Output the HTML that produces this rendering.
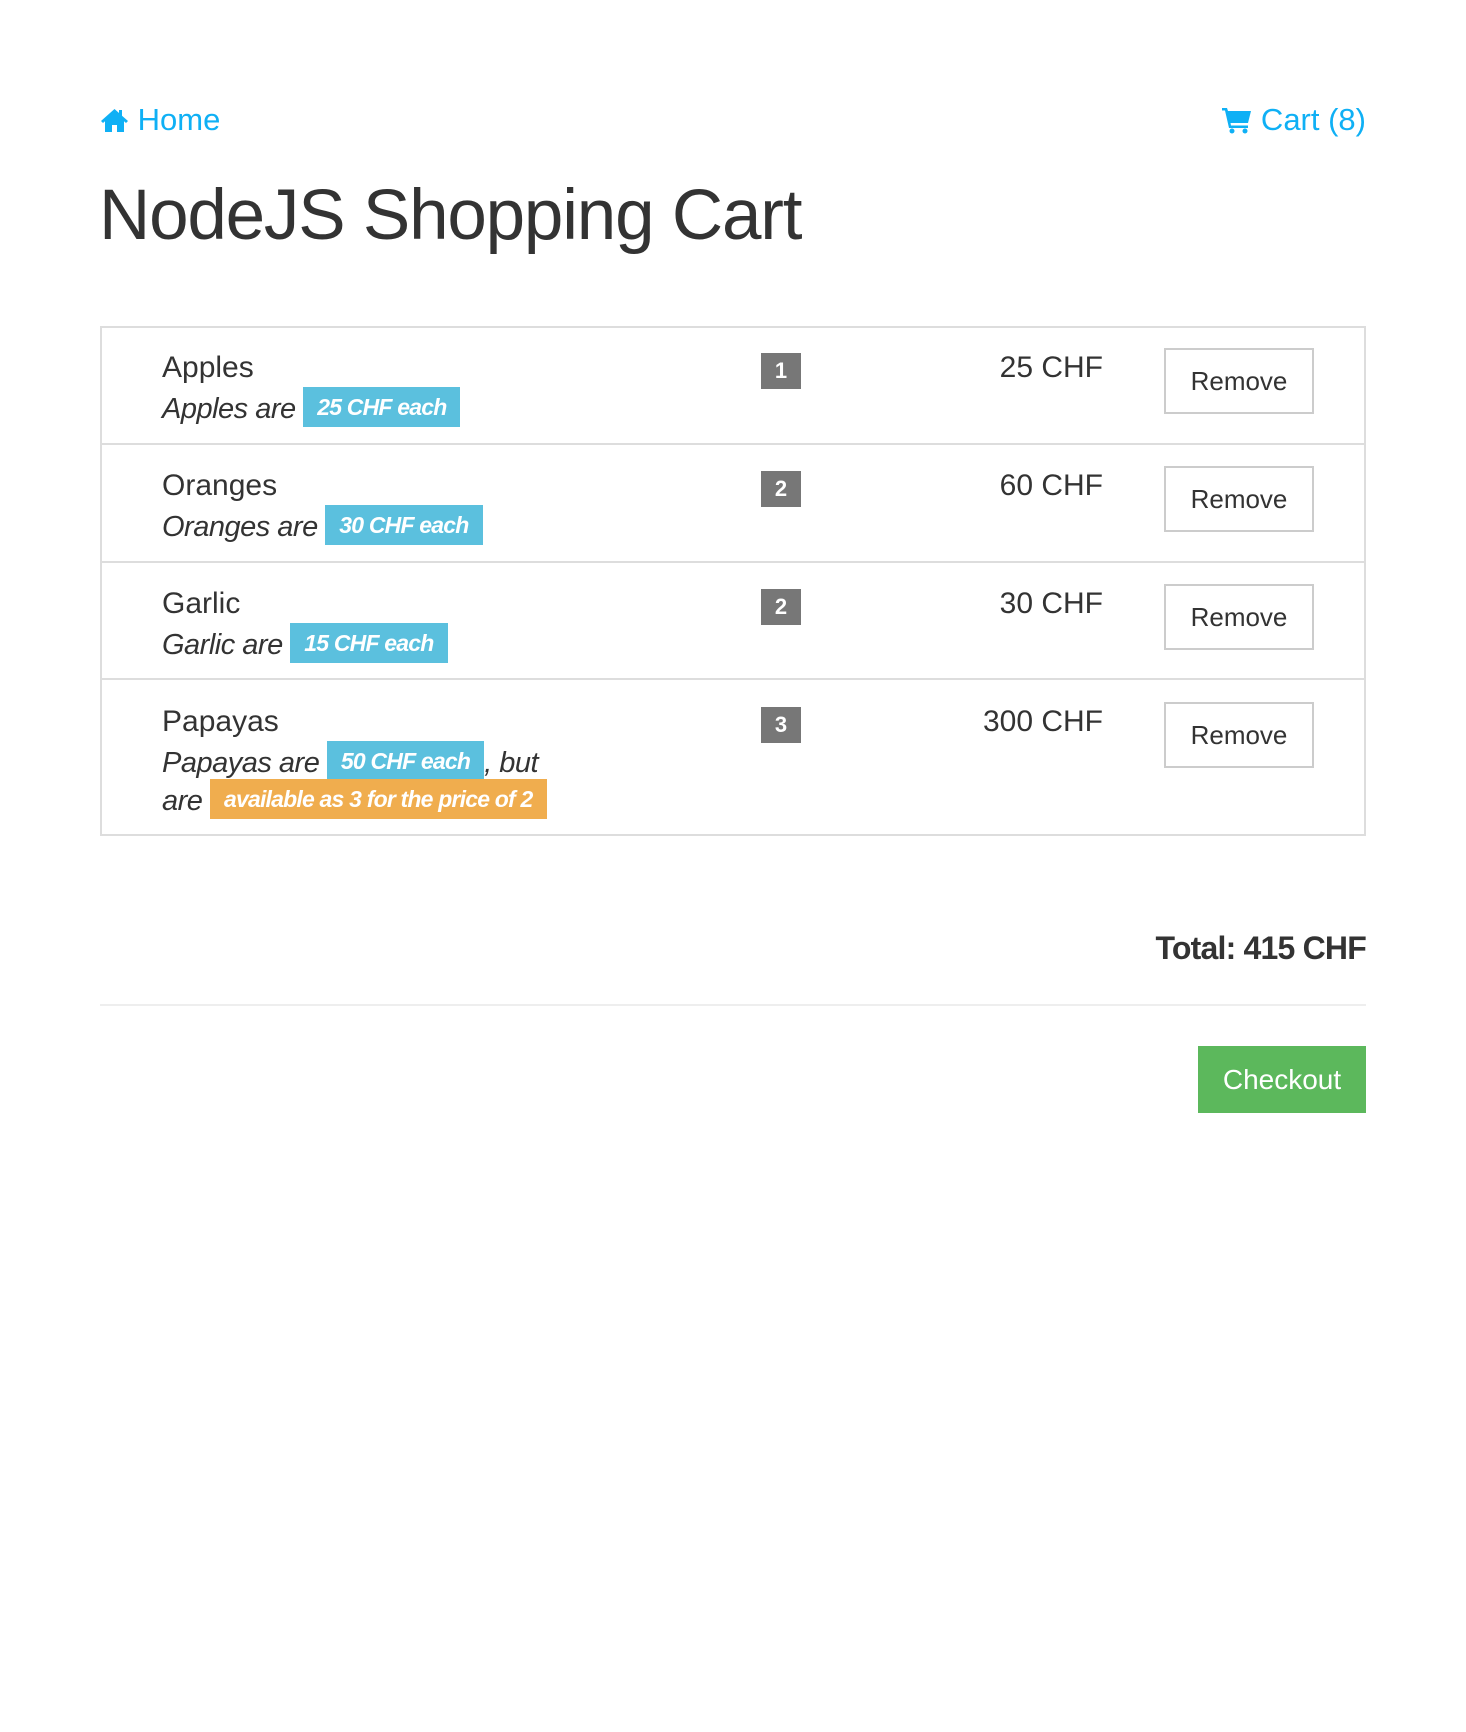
<!DOCTYPE html>
<html><head><meta charset="utf-8"><style>
body{margin:0;width:1466px;height:1732px;background:#fff;font-family:"Liberation Sans",sans-serif;color:#333;position:relative;overflow:hidden}
.a{position:absolute;white-space:nowrap}
.link{color:#0fb0f5;font-size:31px;line-height:40px}
h1{position:absolute;left:99px;top:166px;margin:0;font-weight:normal;font-size:71px;line-height:100px;letter-spacing:-1.2px;color:#333}
.tbl{position:absolute;left:100px;top:326px;width:1262px;height:506px;border:2px solid #ddd}
.sep{position:absolute;left:100px;width:1266px;height:2px;background:#ddd}
.name{font-size:30px;line-height:36px}
.it{font-style:italic;font-size:29px;line-height:38px;letter-spacing:-0.5px}
.lbl{display:inline-block;color:#fff;font-weight:bold;font-style:italic;font-size:23px;line-height:40px;padding:0 14px;letter-spacing:-0.8px;vertical-align:middle;margin-top:-6px}
.blue{background:#5bc0de}.org{background:#f0ad4e}
.badge{position:absolute;left:761px;width:40px;height:36px;background:#777;color:#fff;font-weight:bold;font-size:22px;line-height:36px;text-align:center}
.price{position:absolute;right:363px;font-size:30px;line-height:36px}
.btn{position:absolute;left:1164px;width:146px;height:62px;border:2px solid #ccc;font-size:26px;line-height:62px;text-align:center;color:#333}
</style></head><body>
<div class="a link" style="left:100px;top:100px"><svg width="29" height="26" viewBox="0 0 29 26" style="vertical-align:-3px"><path d="M14.5 2 L1 14 L3 16 L5 14.3 V25 H12 V18 H17 V25 H24 V14.3 L26 16 L28 14 L22 8.7 V3 H19 V6 Z" fill="#0fb0f5"/></svg> Home</div>
<div class="a link" style="right:100px;top:100px"><svg width="30" height="28" viewBox="0 0 30 28" style="vertical-align:-4px"><path d="M0 2 H5 L6 5 H29 L26 17 H8.5 L9 19.5 H26 V22 H7 L3 4.5 H0 Z" fill="#0fb0f5"/><circle cx="10" cy="25" r="2.5" fill="#0fb0f5"/><circle cx="23" cy="25" r="2.5" fill="#0fb0f5"/></svg> Cart (8)</div>
<h1>NodeJS Shopping Cart</h1>
<div class="tbl"></div>
<div class="sep" style="top:443px"></div>
<div class="sep" style="top:561px"></div>
<div class="sep" style="top:678px"></div>

<div class="a name" style="left:162px;top:350px">Apples</div>
<div class="a it" style="left:162px;top:390px">Apples are <span class="lbl blue">25 CHF each</span></div>
<div class="badge" style="top:353px">1</div>
<div class="price" style="top:350px">25 CHF</div>
<div class="btn" style="top:348px">Remove</div>

<div class="a name" style="left:162px;top:468px">Oranges</div>
<div class="a it" style="left:162px;top:508px">Oranges are <span class="lbl blue">30 CHF each</span></div>
<div class="badge" style="top:471px">2</div>
<div class="price" style="top:468px">60 CHF</div>
<div class="btn" style="top:466px">Remove</div>

<div class="a name" style="left:162px;top:586px">Garlic</div>
<div class="a it" style="left:162px;top:626px">Garlic are <span class="lbl blue">15 CHF each</span></div>
<div class="badge" style="top:589px">2</div>
<div class="price" style="top:586px">30 CHF</div>
<div class="btn" style="top:584px">Remove</div>

<div class="a name" style="left:162px;top:704px">Papayas</div>
<div class="a it" style="left:162px;top:744px">Papayas are <span class="lbl blue">50 CHF each</span>, but</div>
<div class="a it" style="left:162px;top:782px">are <span class="lbl org">available as 3 for the price of 2</span></div>
<div class="badge" style="top:707px">3</div>
<div class="price" style="top:704px">300 CHF</div>
<div class="btn" style="top:702px">Remove</div>

<div class="a" style="right:100px;top:928px;font-size:32px;line-height:40px;font-weight:bold;letter-spacing:-0.8px">Total: 415 CHF</div>
<div style="position:absolute;left:100px;top:1004px;width:1266px;height:2px;background:#eee"></div>
<div class="a" style="left:1198px;top:1046px;width:168px;height:67px;background:#5cb85c;color:#fff;font-size:28px;line-height:67px;text-align:center">Checkout</div>
</body></html>
